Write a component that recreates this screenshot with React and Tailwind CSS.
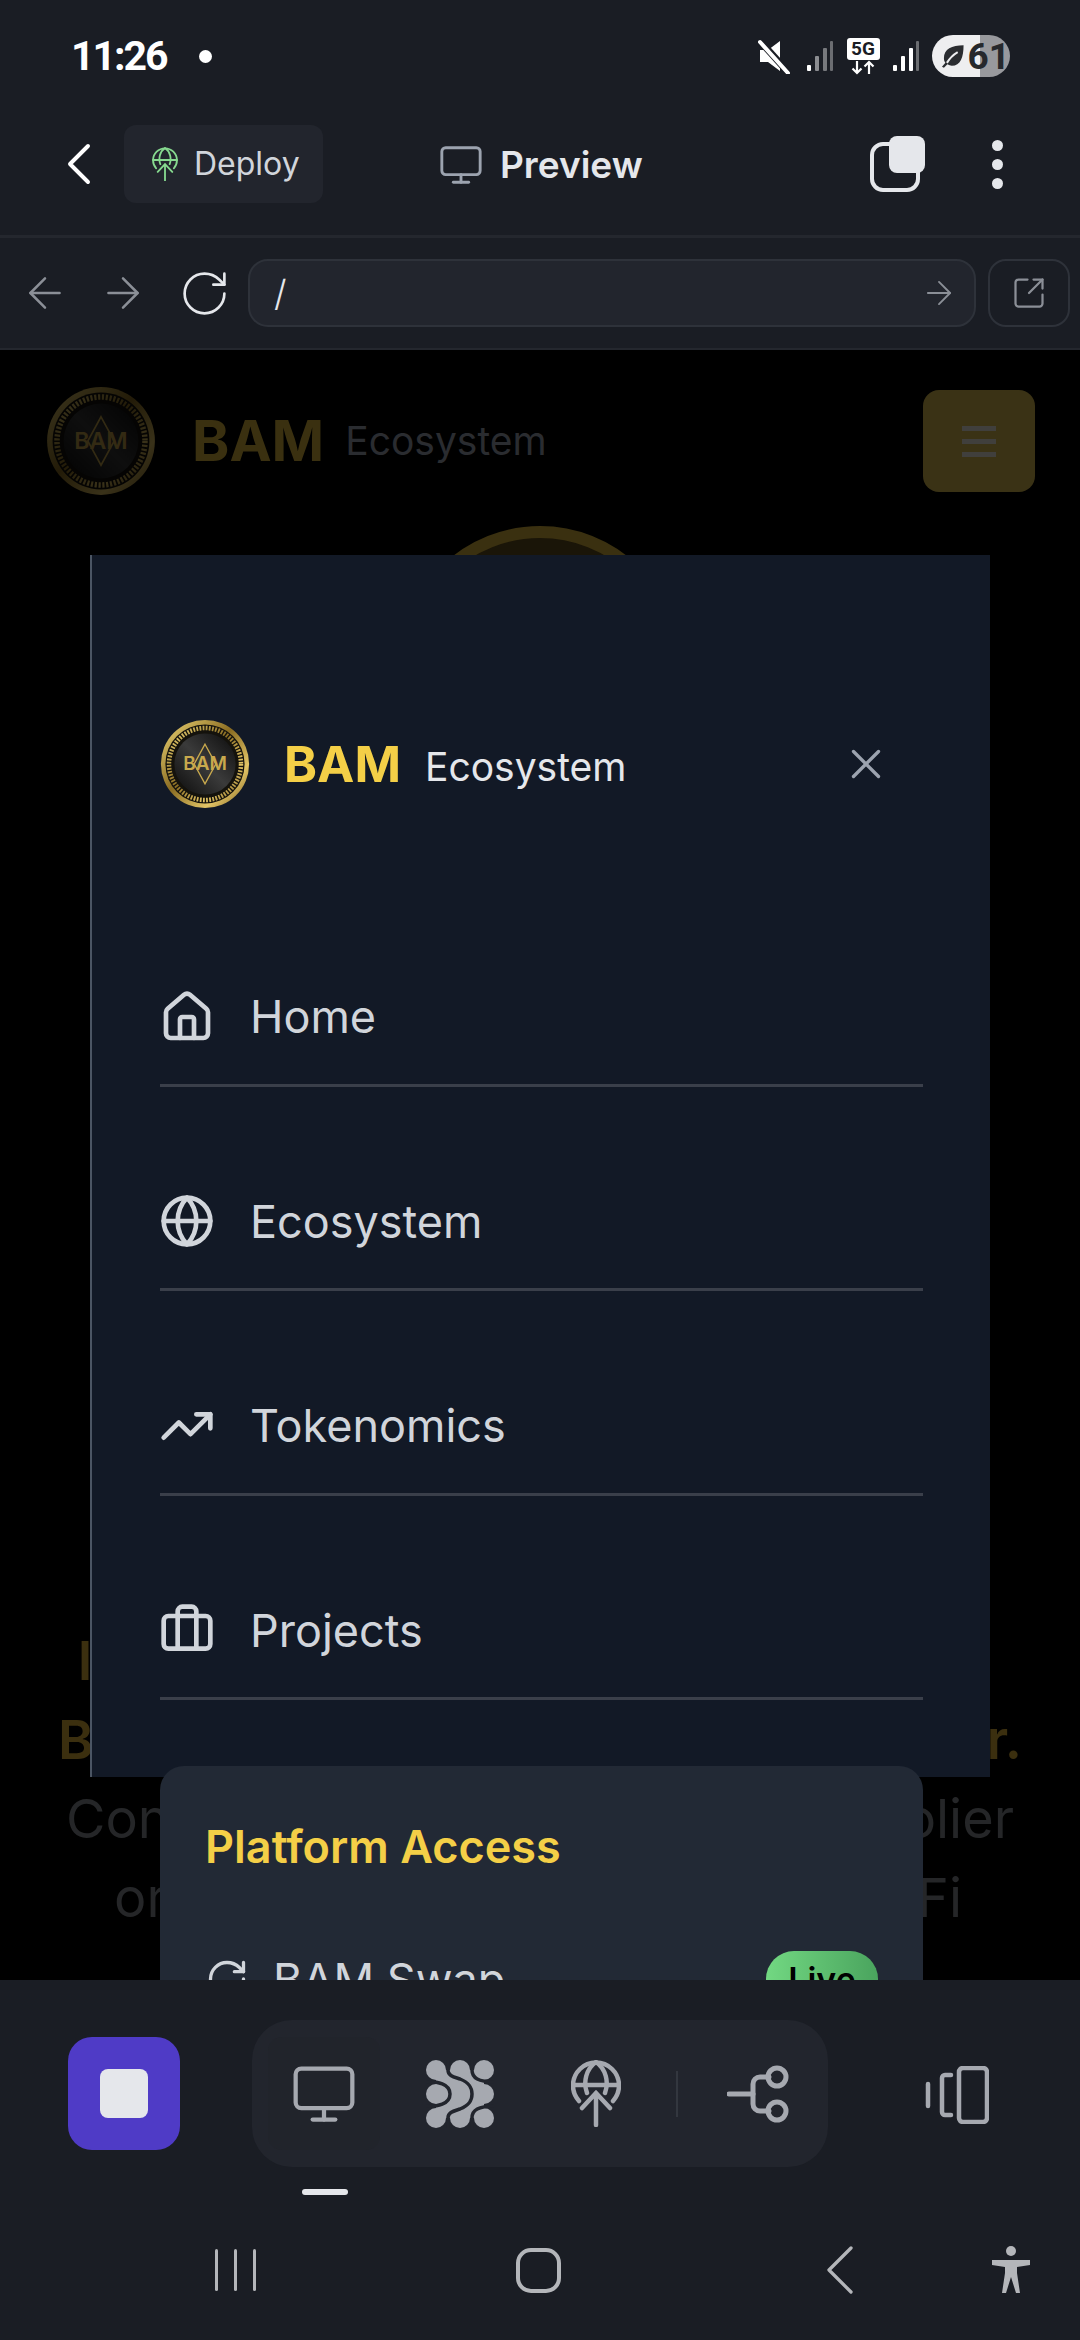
import React from 'react'
import {
  ArrowLeft,
  ArrowRight,
  Briefcase,
  ChevronLeft,
  Globe,
  House,
  Monitor,
  RotateCw,
  SquareArrowOutUpRight,
  TrendingUp,
  X,
} from 'lucide-react'

const MENU = [
  { label: 'Home', Icon: House },
  { label: 'Ecosystem', Icon: Globe },
  { label: 'Tokenomics', Icon: TrendingUp },
  { label: 'Projects', Icon: Briefcase },
]

const Signal = ({ dim }) => (
  <svg width="28" height="32" viewBox="0 0 28 32">
    <rect x="1" y="25" width="4" height="6" rx="1" fill="#fff" />
    <rect x="9" y="16" width="4" height="15" rx="1" fill={dim ? '#8b8d91' : '#fff'} />
    <rect x="17" y="8" width="4" height="23" rx="1" fill={dim ? '#77797d' : '#fff'} />
    <rect x="24" y="1" width="3" height="30" rx="1" fill="#6b6d71" />
  </svg>
)

const MuteIcon = () => (
  <svg width="32" height="36" viewBox="0 0 32 36">
    <path d="M2 12h8L22 3v30L10 24H2z" fill="#fff" />
    <path d="M1 2l29 32" stroke="#1a1d24" strokeWidth="7" />
    <path d="M2 4l28 31" stroke="#fff" strokeWidth="4" strokeLinecap="round" />
  </svg>
)

const FiveG = () => (
  <div className="flex flex-col items-center w-[34px]">
    <div className="w-[33px] h-[22px] bg-white rounded-[3px] flex items-center justify-center text-[#1a1d24] text-[19px] font-bold leading-none font-['Roboto',sans-serif]">
      5G
    </div>
    <svg width="26" height="15" viewBox="0 0 26 15" fill="none" stroke="#fff" strokeWidth="2.2">
      <path d="M7 1v12M2.5 8.5 7 13l4.500-4.500M19 14V2M14.500 6.500 19 2l4.500 4.500" />
    </svg>
  </div>
)

const Battery = () => (
  <div className="w-[78px] h-[42px] rounded-full bg-[linear-gradient(90deg,#eeeef0_61%,#98999d_61%)] flex items-center pl-[8px] gap-[2px]">
    <svg width="26" height="26" viewBox="0 0 26 26">
      <path d="M24 2C12 2 4 6 4 15c0 2 .5 3.500 1.500 5L2 24l2 1 3.500-3.500C9 22.500 10.500 23 12 23c9 0 12-9 12-21z" fill="#2a2c30" />
      <path d="M7 20c3-5 6-8 11-11" stroke="#eeeef0" strokeWidth="2" fill="none" />
    </svg>
    <span className="text-[37px] leading-none font-bold text-[#26282c] font-['Roboto',sans-serif]">61</span>
  </div>
)

const CopyIcon = () => (
  <svg width="56" height="56" viewBox="0 0 56 56" fill="none">
    <rect x="2" y="8" width="46" height="46" rx="11" stroke="#e5e7eb" strokeWidth="4" />
    <rect x="19" y="0" width="36" height="37" rx="8" fill="#e5e7eb" />
  </svg>
)

const DeployIcon = ({ size, color, stroke }) => (
  <svg width={size} height={size * 1.34} viewBox="0 0 50 67" fill="none" stroke={color} strokeWidth={stroke} strokeLinecap="round">
    <path d="M8 41A23 23 0 1 1 42 41" />
    <path d="M16 33C12 22 15 9 25 2 35 9 38 22 34 33" />
    <path d="M2 25h46" />
    <path d="M25 65V33M11 48l14-15 14 15" />
  </svg>
)

// union of nine dots with the thin gaps cut back out in the tray colour
const BlobIcon = () => (
  <svg width="68" height="68" viewBox="0 0 68 68">
    <g fill="#a6a9b0">
      <rect x="10" y="10" width="48" height="48" />
      <circle cx="10" cy="10" r="10" />
      <circle cx="34" cy="10" r="10" />
      <circle cx="58" cy="10" r="10" />
      <circle cx="10" cy="34" r="10" />
      <circle cx="58" cy="34" r="10" />
      <circle cx="10" cy="58" r="10" />
      <circle cx="34" cy="58" r="10" />
      <circle cx="58" cy="58" r="10" />
    </g>
    <g fill="none" stroke="#22252d" strokeWidth="3.500">
      <path d="M-2 22C12 21 24 24 24 34 24 44 12 47-2 46" />
      <path d="M22 -2V10C22 16 28 17 34 19 44 23 46 28 46 34 46 40 44 45 34 49 28 51 22 52 22 58V70" />
      <path d="M46 -2V10C46 18 52 22 70 22" />
      <path d="M46 70V58C46 50 52 46 70 46" />
    </g>
  </svg>
)

const ShareIcon = () => (
  <svg width="62" height="58" viewBox="0 0 62 58" fill="none" stroke="#a6a9b0" strokeWidth="5" strokeLinecap="round">
    <path d="M2 29h24" />
    <path d="M42 12H33a7 7 0 0 0-7 7v20a7 7 0 0 0 7 7h9" />
    <circle cx="50" cy="12" r="9" />
    <circle cx="50" cy="46" r="9" />
  </svg>
)

const DeviceIcon = () => (
  <svg width="64" height="58" viewBox="0 0 64 58" fill="none" stroke="#a6a9b0" strokeWidth="4.500" strokeLinecap="round">
    <rect x="34" y="2" width="28" height="54" rx="4" />
    <path d="M26 9h-6a3 3 0 0 0-3 3v34a3 3 0 0 0 3 3h6" />
    <path d="M3 18v22" />
  </svg>
)

// gold coin used for the logo, size is the only thing that changes
const Coin = ({ size, id, dim }) => (
  <svg width={size} height={size} viewBox="0 0 100 100" className={dim ? 'opacity-25' : ''}>
    <defs>
      <linearGradient id={id} x1="0" y1="0" x2="1" y2="1">
        <stop offset="0" stopColor="#f0d878" />
        <stop offset="0.45" stopColor="#8a6c22" />
        <stop offset="0.75" stopColor="#e3c566" />
        <stop offset="1" stopColor="#7a5c1c" />
      </linearGradient>
      <linearGradient id={`${id}-core`} x1="0" y1="1" x2="1" y2="0">
        <stop offset="0" stopColor="#0b0b0b" />
        <stop offset="0.5" stopColor="#3a3a3a" />
        <stop offset="1" stopColor="#0b0b0b" />
      </linearGradient>
    </defs>
    <circle cx="50" cy="50" r="49" fill={`url(#${id})`} />
    <circle cx="50" cy="50" r="44" fill="#14120c" />
    <circle cx="50" cy="50" r="40" fill="none" stroke={`url(#${id})`} strokeWidth="5" strokeDasharray="2 1.500" />
    <circle cx="50" cy="50" r="34" fill={`url(#${id}-core)`} />
    <path d="M50 28 62 50 50 72 38 50z" fill="none" stroke="#c9a94d" strokeWidth="1.500" />
    <text x="50" y="57" textAnchor="middle" fontSize="21" fontWeight="600" fill="#c9a94d" fontFamily="Inter, sans-serif">
      BAM
    </text>
  </svg>
)

const HeroLine = ({ left, right, className }) => (
  <div className={`flex justify-between h-[79px] items-center leading-none ${className}`}>
    <span>{left}</span>
    <span>{right}</span>
  </div>
)

export default function App() {
  return (
    <div className="w-[1080px] h-[2340px] flex flex-col overflow-hidden bg-[#1a1d24] font-['Inter',sans-serif] text-[#e5e7eb]">
      {/* Status bar */}
      <div className="h-[112px] shrink-0 flex items-center justify-between pl-[71px] pr-[70px]">
        <div className="flex items-center">
          <span className="text-[41px] font-bold tracking-[-2px] text-white font-['Roboto',sans-serif] leading-none">11:26</span>
          <span className="w-[13px] h-[13px] rounded-full bg-white ml-[32px]" />
        </div>
        <div className="flex items-center">
          <MuteIcon />
          <div className="ml-[16px]"><Signal dim /></div>
          <div className="ml-[12px]"><FiveG /></div>
          <div className="ml-[12px]"><Signal /></div>
          <div className="ml-[12px]"><Battery /></div>
        </div>
      </div>

      {/* Title row */}
      <div className="h-[126px] shrink-0 flex items-start border-b-[3px] border-[#24272e]">
        <div className="w-[124px] h-[78px] mt-[13px] flex items-center justify-end">
          <ChevronLeft size={72} strokeWidth={1.300} className="text-white mr-[9px]" />
        </div>
        <div className="h-[78px] w-[199px] mt-[13px] rounded-[12px] bg-[#22252d] flex items-center pl-[28px]">
          <DeployIcon size={26} color="#86d98f" stroke={3.500} />
          <span className="ml-[16px] text-[32px] text-[#d1d5db]">Deploy</span>
        </div>
        <div className="h-[78px] mt-[14px] ml-[115px] flex items-center">
          <Monitor size={46} strokeWidth={1.500} className="text-[#9ca3af]" />
          <span className="ml-[16px] text-[37px] font-semibold text-[#e5e7eb]">Preview</span>
        </div>
        <div className="h-[78px] mt-[13px] ml-[227px] flex items-center">
          <CopyIcon />
        </div>
        <div className="h-[78px] mt-[13px] ml-[66px] flex flex-col items-center justify-center gap-[8px]">
          <span className="w-[11px] h-[11px] rounded-full bg-[#e5e7eb]" />
          <span className="w-[11px] h-[11px] rounded-full bg-[#e5e7eb]" />
          <span className="w-[11px] h-[11px] rounded-full bg-[#e5e7eb]" />
        </div>
      </div>

      {/* Address row */}
      <div className="h-[112px] shrink-0 flex items-center border-b-[2px] border-[#24272e] pl-[20px]">
        <ArrowLeft size={50} strokeWidth={1.200} className="text-[#8b8f97]" />
        <ArrowRight size={50} strokeWidth={1.200} className="text-[#8b8f97] ml-[28px]" />
        <RotateCw size={53} strokeWidth={1.200} className="text-[#e5e7eb] ml-[30px]" />
        <div className="ml-[17px] w-[728px] h-[68px] rounded-[20px] bg-[#22252d] border-[2px] border-[#2e323a] flex items-center justify-between pl-[24px] pr-[16px]">
          <span className="text-[36px] text-[#e5e7eb] font-light">/</span>
          <ArrowRight size={38} strokeWidth={1.200} className="text-[#8b8f97]" />
        </div>
        <div className="ml-[12px] w-[82px] h-[68px] rounded-[18px] border-[2px] border-[#2e323a] flex items-center justify-center">
          <SquareArrowOutUpRight size={36} strokeWidth={1.500} className="text-[#8b8f97]" />
        </div>
      </div>

      {/* Web view */}
      <div className="relative flex-1 min-h-0 overflow-hidden bg-black">
        {/* Page dimmed behind the drawer */}
        <div className="flex items-center justify-between pl-[46px] pr-[45px] pt-[36px]">
          <div className="flex items-center">
            <Coin size={110} id="coin-back" dim />
            <span className="ml-[36px] text-[56.500px] font-bold text-[#3a3010] leading-none">BAM</span>
            <span className="ml-[21px] -mt-[2px] text-[39px] text-[#2a2c30] leading-none">Ecosystem</span>
          </div>
          <div className="w-[112px] h-[102px] rounded-[16px] bg-[#3a3215] flex flex-col items-center justify-center gap-[8px]">
            <span className="w-[34px] h-[5px] bg-[#403f3c]" />
            <span className="w-[34px] h-[5px] bg-[#403f3c]" />
            <span className="w-[34px] h-[5px] bg-[#403f3c]" />
          </div>
        </div>
        <div className="flex justify-center mt-[30px]">
          <div className="w-[284px] h-[284px] rounded-full bg-[#1a1508] border-[12px] border-[#3a3010]" />
        </div>
        <div className="mt-[811px] text-[54px] font-semibold text-[#3b2f0f]">
          <HeroLine className="pl-[78px] pr-[88px]" left="l" right="s" />
          <HeroLine className="pl-[58px] pr-[58px]" left="B" right="r." />
        </div>
        <div className="text-[54px] text-[#252628]">
          <HeroLine className="pl-[66px] pr-[66px]" left="Con" right="olier" />
          <HeroLine className="pl-[114px] pr-[118px]" left="or" right="Fi" />
        </div>

        {/* Drawer */}
        <div className="absolute left-[90px] top-[205px] w-[900px] h-[1222px] bg-[#121926] border-l-[2px] border-[#4b5563] pl-[68px] pr-[67px] pt-[164px]">
          <div className="flex items-center h-[90px]">
            <Coin size={90} id="coin-front" />
            <span className="ml-[34px] text-[50px] font-bold text-[#f4cf47] leading-none">BAM</span>
            <span className="ml-[24px] text-[39px] text-[#e5e7eb] leading-none mt-[4px]">Ecosystem</span>
            <X size={50} strokeWidth={1.600} className="text-[#9ca3af] ml-auto mr-[32px]" />
          </div>

          <div className="mt-[141px]">
            {MENU.map(({ label, Icon }) => (
              <div key={label} className="mt-[68px] h-[136.500px] flex items-center border-b-[3px] border-[#3a3f4a]">
                <Icon size={56} strokeWidth={2} className="text-[#d1d5db] -ml-[1px]" />
                <span className="ml-[35px] text-[45px] text-[#d1d5db] leading-none">{label}</span>
              </div>
            ))}
          </div>

          <div className="mt-[66px] rounded-[24px] bg-[#222935] h-[500px] px-[45px] pt-[53px]">
            <div className="text-[45px] font-semibold text-[#f4cf47] leading-[56px]">Platform Access</div>
            <div className="mt-[76px] flex items-center justify-between h-[56px]">
              <div className="flex items-center">
                <RotateCw size={44} strokeWidth={1.800} className="text-[#d1d5db]" />
                <span className="ml-[24px] text-[45px] text-[#d1d5db] leading-none">BAM Swap</span>
              </div>
              <span className="w-[112px] h-[56px] rounded-full bg-gradient-to-r from-[#72d882] to-[#4aa45e] flex items-center justify-center text-[34px] font-semibold text-black">
                Live
              </span>
            </div>
          </div>
        </div>
      </div>

      {/* Bottom tool bar */}
      <div className="h-[360px] shrink-0 flex flex-col">
        <div className="flex items-start pt-[40px] pl-[68px]">
          <div className="mt-[17px] w-[112px] h-[113px] rounded-[24px] bg-[#4f3bc6] flex items-center justify-center">
            <span className="w-[48px] h-[49px] rounded-[8px] bg-[#e5e7eb]" />
          </div>
          <div className="ml-[72px] w-[576px] h-[147px] rounded-[40px] bg-[#22252d] flex items-center pl-[16px]">
            <div className="w-[112px] h-[113px] rounded-[14px] bg-[#21242b] flex items-center justify-center">
              <Monitor size={68} strokeWidth={1.500} className="text-[#a6a9b0]" />
            </div>
            <div className="ml-[46px]"><BlobIcon /></div>
            <div className="ml-[77px]"><DeployIcon size={50} color="#a6a9b0" stroke={4.500} /></div>
            <span className="ml-[55px] w-[2px] h-[46px] bg-[#33373f]" />
            <div className="ml-[49px]"><ShareIcon /></div>
          </div>
          <div className="ml-[97px] mt-[46px]"><DeviceIcon /></div>
        </div>
        <div className="ml-[302px] mt-[22px] w-[46px] h-[6px] rounded-full bg-[#e5e7eb]" />

        {/* Android nav bar */}
        <div className="mt-[50px] flex items-center pl-[215px] h-[50px]">
          <div className="flex gap-[16px]">
            <span className="w-[3px] h-[42px] bg-[#b4b6ba] rounded-full" />
            <span className="w-[3px] h-[42px] bg-[#b4b6ba] rounded-full" />
            <span className="w-[3px] h-[42px] bg-[#b4b6ba] rounded-full" />
          </div>
          <span className="ml-[260px] w-[45px] h-[45px] rounded-[15px] border-[4px] border-[#b4b6ba]" />
          <ChevronLeft size={88} strokeWidth={0.900} className="text-[#b4b6ba] ml-[235px] shrink-0" />
          <svg width="42" height="48" viewBox="0 0 42 48" className="ml-[106px] shrink-0" fill="#b4b6ba">
            <circle cx="21" cy="5" r="5" />
            <path d="M2 14h38v5l-13 2v6l3 20h-4l-5-16-5 16h-4l3-20v-6L2 19z" />
          </svg>
        </div>
      </div>
    </div>
  )
}
